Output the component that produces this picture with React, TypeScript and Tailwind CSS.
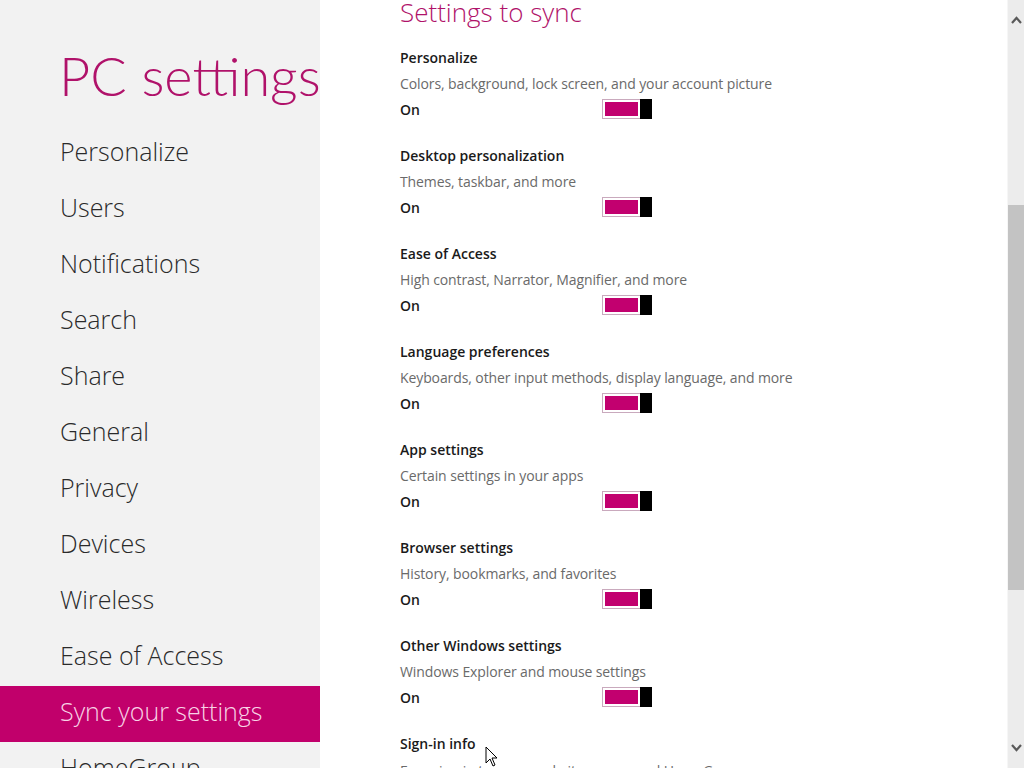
import React from "react";

const nav = [
  "Personalize",
  "Users",
  "Notifications",
  "Search",
  "Share",
  "General",
  "Privacy",
  "Devices",
  "Wireless",
  "Ease of Access",
  "Sync your settings",
  "HomeGroup",
];

const items = [
  ["Personalize", "Colors, background, lock screen, and your account picture"],
  ["Desktop personalization", "Themes, taskbar, and more"],
  ["Ease of Access", "High contrast, Narrator, Magnifier, and more"],
  ["Language preferences", "Keyboards, other input methods, display language, and more"],
  ["App settings", "Certain settings in your apps"],
  ["Browser settings", "History, bookmarks, and favorites"],
  ["Other Windows settings", "Windows Explorer and mouse settings"],
  ["Sign-in info", "Easy sign-in to some websites, apps, and HomeGroup"],
];

function Toggle() {
  return (
    <div className="relative w-[50px] h-[20px] border border-[#c9a9bd] bg-white flex">
      <div className="m-[2px] flex-1 bg-[#c2006f]" />
      <div className="w-[12px] h-[20px] -mt-px -mr-px bg-black" />
    </div>
  );
}

export default function App() {
  return (
    <div
      className="w-[1024px] h-[768px] overflow-hidden flex bg-white relative"
      style={{ fontFamily: '"Open Sans", "Noto Sans", sans-serif' }}
    >
      <div className="w-[320px] h-full bg-[#f2f2f2] flex flex-col shrink-0">
        <div className="h-[126px] shrink-0 pl-[59px] pt-[46px]">
          <div
            className="text-[54px] leading-[60px] font-light text-[#b0126a] whitespace-nowrap"
            style={{ fontFamily: 'Lato, "Open Sans", sans-serif' }}
          >
            PC settings
          </div>
        </div>
        {nav.map((n) => {
          const sel = n === "Sync your settings";
          return (
            <div
              key={n}
              className={
                "h-[56px] shrink-0 flex items-center pl-[60px] text-[25px] font-light whitespace-nowrap " +
                (sel ? "bg-[#c1006b] text-[#f8d3e6]" : "text-[#2a2a2a]")
              }
            >
              <span className="-mt-[4px]">{n}</span>
            </div>
          );
        })}
      </div>
      <div className="flex-1 h-full flex flex-col pl-[80px]">
        <div className="h-[44px] shrink-0 flex items-center">
          <div className="text-[26px] font-light text-[#b0126a] leading-none -mt-[20px]">
            Settings to sync
          </div>
        </div>
        {items.map(([t, d], i) => (
          <div key={t} className="h-[98px] shrink-0 flex flex-col">
            <div className="h-[26px] shrink-0 flex items-center text-[14px] font-semibold text-[#1a1a1a]">
              {t}
            </div>
            <div
              className={
                "h-[26px] shrink-0 flex items-center text-[14px] tracking-[-0.1px] text-[#6a6a6a] " +
                (i === 7 ? "pt-[2px]" : "")
              }
            >
              {d}
            </div>
            <div className="h-[26px] shrink-0 flex items-center">
              <div className="w-[202px] text-[14px] font-semibold text-[#1a1a1a]">On</div>
              <Toggle />
            </div>
          </div>
        ))}
      </div>
      <div className="w-[17px] h-full bg-[#ececec] border-l border-[#f6f6f6] flex flex-col shrink-0">
        <div className="h-[40px] flex items-center justify-center">
          <svg width="11" height="8" viewBox="0 0 11 8">
            <path d="M1 7 L5.5 2 L10 7" stroke="#5a5a5a" strokeWidth="2.2" fill="none" />
          </svg>
        </div>
        <div className="h-[165px]" />
        <div className="h-[385px] bg-[#c3c3c3]" />
        <div className="flex-1" />
        <div className="h-[40px] flex items-center justify-center">
          <svg width="11" height="8" viewBox="0 0 11 8">
            <path d="M1 1 L5.5 6 L10 1" stroke="#5a5a5a" strokeWidth="2.2" fill="none" />
          </svg>
        </div>
      </div>
      <svg
        className="absolute left-[485px] top-[746px]"
        width="14"
        height="22"
        viewBox="0 0 14 22"
      >
        <path d="M1 1 L1 17 L5 13 L8 20 L10 19 L7 12 L12 12 Z" fill="white" stroke="black" strokeWidth="1" />
      </svg>
    </div>
  );
}
